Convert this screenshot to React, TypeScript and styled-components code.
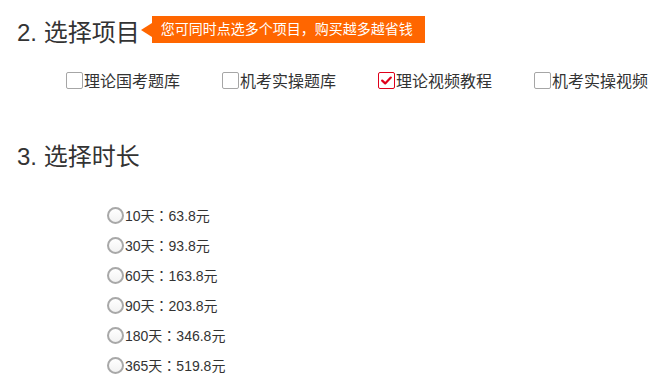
import React from 'react'
import styled, { createGlobalStyle } from 'styled-components'

const GlobalStyle = createGlobalStyle`
  html, body {
    margin: 0;
    padding: 0;
    background: #fff;
    overflow: hidden;
  }
  body {
    font-family: "Liberation Sans", "Noto Sans CJK SC", sans-serif;
    color: #333;
  }
`

const projects = [
  { label: '理论国考题库', checked: false },
  { label: '机考实操题库', checked: false },
  { label: '理论视频教程', checked: true },
  { label: '机考实操视频', checked: false },
]

const durations = [
  '10天：63.8元',
  '30天：93.8元',
  '60天：163.8元',
  '90天：203.8元',
  '180天：346.8元',
  '365天：519.8元',
]

const App = () => {
  return (
    <Page>
      <GlobalStyle />

      <HeaderRow>
        <Heading>2. 选择项目</Heading>
        <Tip>
          <TipArrow />
          <TipBox>您可同时点选多个项目，购买越多越省钱</TipBox>
        </Tip>
      </HeaderRow>

      <CheckRow>
        {projects.map(p => (
          <CheckItem key={p.label}>
            <CheckBox checked={p.checked}>
              {p.checked && (
                <svg width="11" height="9" viewBox="0 0 11 9">
                  <path d="M1.2 4.6 L4.2 7.4 L9.8 1.6" fill="none" stroke="#e0001a" strokeWidth="2.2" strokeLinecap="round" strokeLinejoin="round" />
                </svg>
              )}
            </CheckBox>
            <CheckLabel>{p.label}</CheckLabel>
          </CheckItem>
        ))}
      </CheckRow>

      <SecondHeading>3. 选择时长</SecondHeading>

      <RadioList>
        {durations.map(d => (
          <RadioItem key={d}>
            <RadioCircle />
            <RadioLabel>{d}</RadioLabel>
          </RadioItem>
        ))}
      </RadioList>
    </Page>
  )
}

const Page = styled.div`
  width: 656px;
  height: 381px;
  overflow: hidden;
`

const HeaderRow = styled.div`
  display: flex;
  align-items: flex-start;
  padding: 16px 0 0 17px;
`

const Heading = styled.h2`
  margin: 0;
  font-size: 24px;
  font-weight: normal;
  line-height: 34px;
  color: #333;
  white-space: nowrap;
`

const Tip = styled.div`
  display: flex;
  align-items: center;
  margin-left: 1px;
`

const TipArrow = styled.span`
  width: 0;
  height: 0;
  border-top: 7px solid transparent;
  border-bottom: 7px solid transparent;
  border-right: 11px solid #ff6600;
`

const TipBox = styled.div`
  height: 27px;
  line-height: 27px;
  padding: 0 12px 0 9px;
  background: #ff6600;
  color: #fff;
  font-size: 14px;
  white-space: nowrap;
`

const CheckRow = styled.div`
  display: flex;
  margin-top: 15px;
  padding-left: 66px;
  height: 30px;
  white-space: nowrap;
`

const CheckItem = styled.label`
  display: flex;
  align-items: center;
  flex: 0 0 156px;
`

const CheckBox = styled.span<{ checked: boolean }>`
  display: flex;
  align-items: center;
  justify-content: center;
  box-sizing: border-box;
  width: 17px;
  height: 17px;
  border: 1px solid ${p => (p.checked ? '#e0001a' : '#a6a6a6')};
  border-radius: 2px;
  background: #fff;
`

const CheckLabel = styled.span`
  margin-left: 1px;
  font-size: 16px;
  color: #333;
`

const SecondHeading = styled(Heading)`
  margin-top: 45px;
  padding-left: 17px;
`

const RadioList = styled.div`
  display: flex;
  flex-direction: column;
  margin-top: 26px;
  padding-left: 107px;
`

const RadioItem = styled.label`
  display: flex;
  align-items: center;
  height: 30px;
`

const RadioCircle = styled.span`
  box-sizing: border-box;
  width: 17px;
  height: 17px;
  border: 2px solid #a8a8a8;
  border-radius: 50%;
  background: linear-gradient(#fff, #f2f2f2);
`

const RadioLabel = styled.span`
  margin-left: 1px;
  font-family: "Liberation Sans", "Noto Sans CJK TC", sans-serif;
  font-size: 14px;
  color: #333;
`

export default App
